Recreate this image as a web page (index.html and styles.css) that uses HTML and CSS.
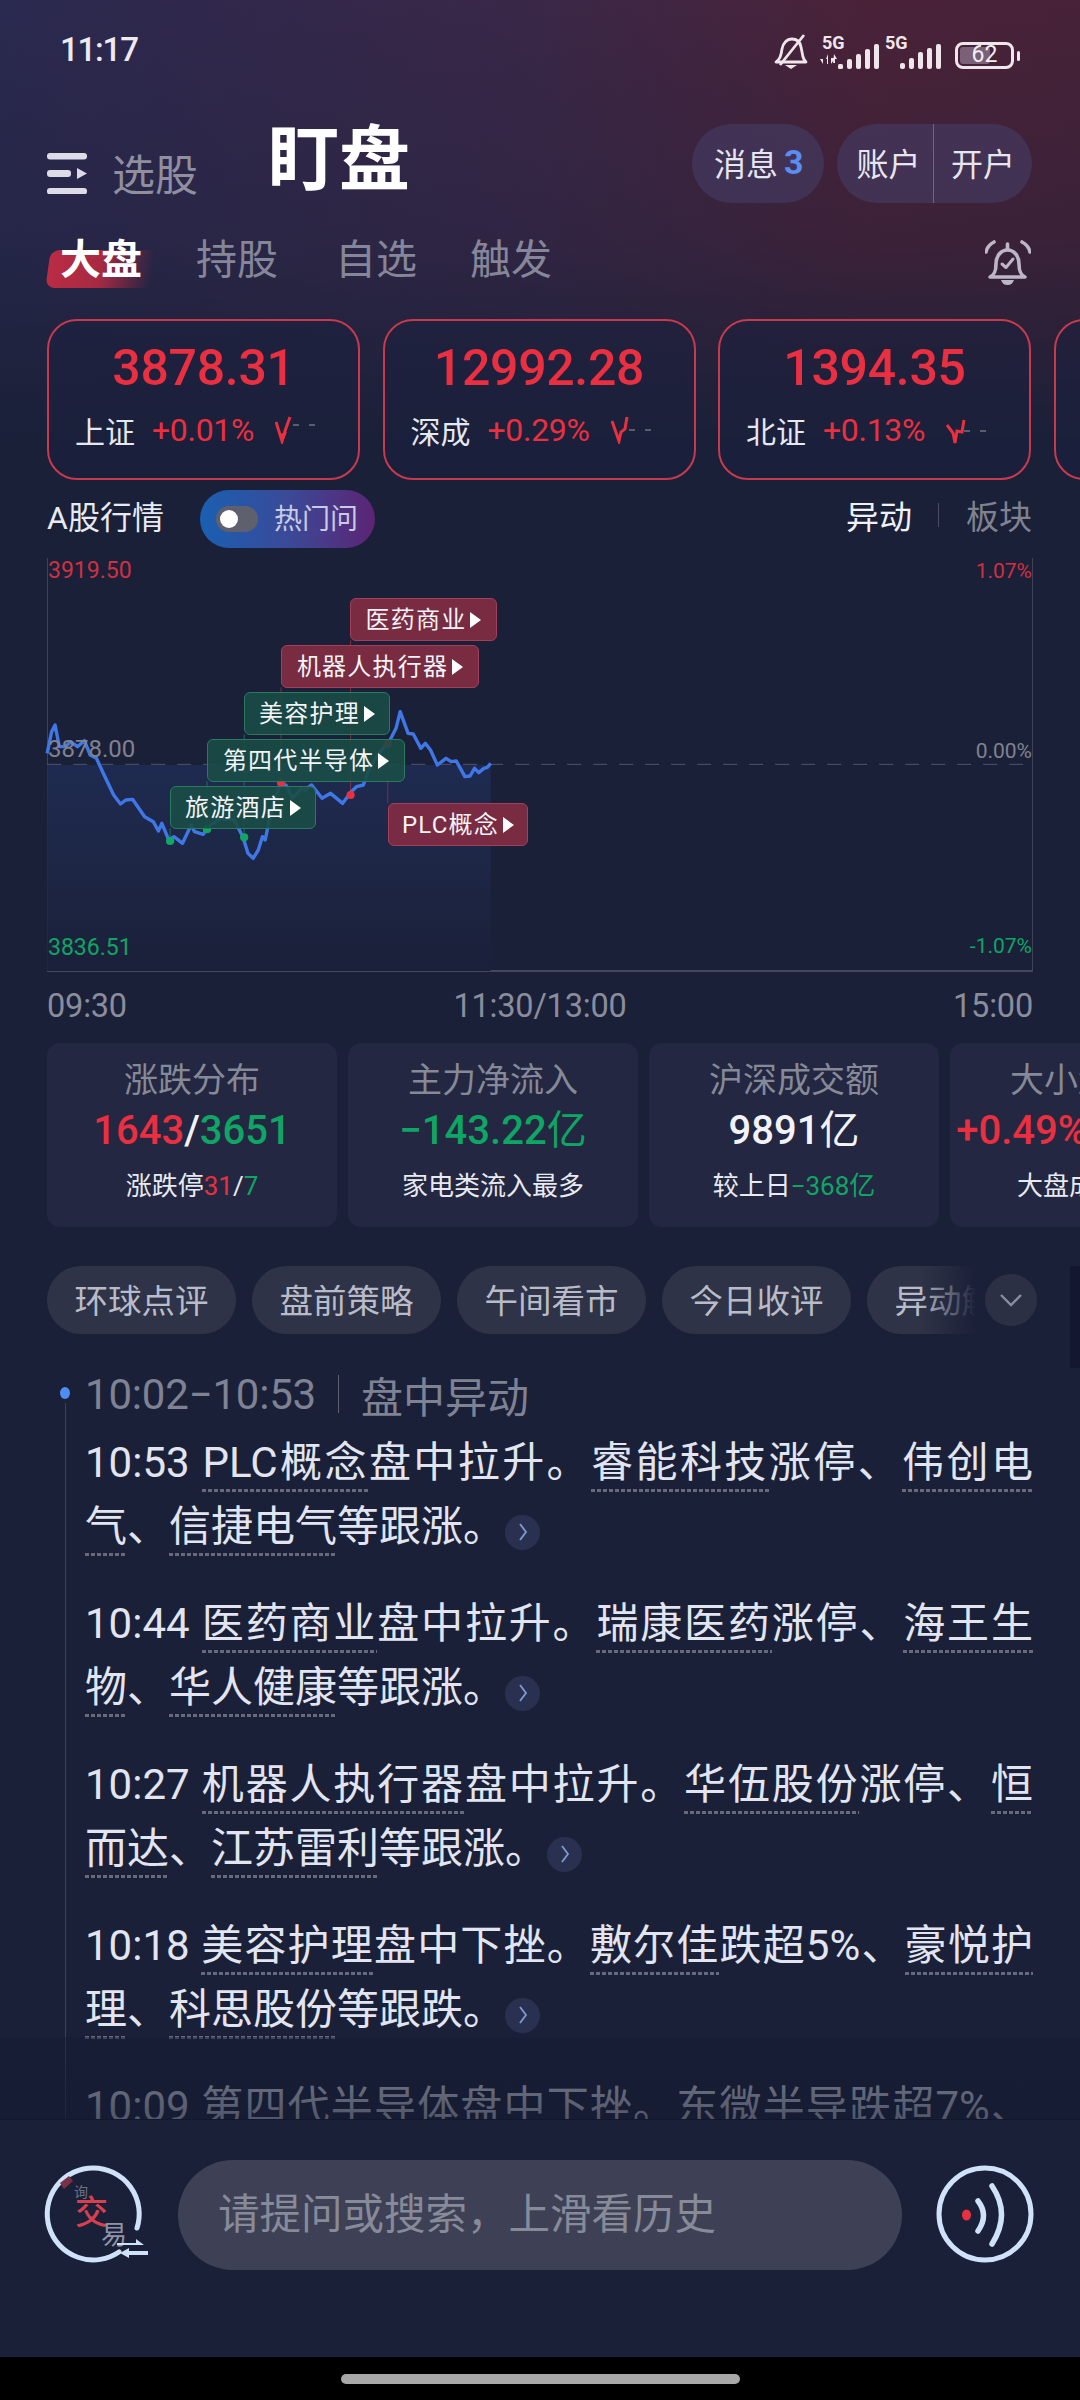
FILE: index.html
```html
<!DOCTYPE html>
<html lang="zh-CN">
<head>
<meta charset="utf-8">
<title>盯盘</title>
<link rel="stylesheet" href="styles.css">
</head>
<body>
<div class="page">
  <div class="status">
    <span class="time">11:17</span>
    <div class="status-icons">
      <svg class="ic-mute" viewBox="0 0 36 36"><path d="M3 29c4-3 5-6 6-13 1-6 5-10 10-10s8 3 9 8l2 10c.6 2 2 4 3 5H3z" fill="none" stroke="#efe6ec" stroke-width="2.8" stroke-linejoin="round"/><path d="M7 32 31 2" stroke="#efe6ec" stroke-width="2.8"/><path d="M12 32h12l-6 4z" fill="#efe6ec"/></svg>
      <div class="net">
        <span class="net-label">5G</span>
        <svg class="net-arrows" viewBox="0 0 18 10"><path d="M3 0v5H0l3 5zM8 0l-2 5h1v5h1zM11 10V4h4zM14 0l3 5h-2v4h-2z" fill="#efe6ec"/></svg>
      </div>
      <svg class="bars" viewBox="0 0 41 26"><g fill="#efe6ec"><rect x="0" y="21" width="5" height="5" rx="1.500"/><rect x="9" y="16" width="5" height="10" rx="2"/><rect x="18" y="11" width="5" height="15" rx="2"/><rect x="27" y="6" width="5" height="20" rx="2"/><rect x="36" y="1" width="5" height="25" rx="2"/></g></svg>
      <div class="net net-b">
        <span class="net-label">5G</span>
      </div>
      <svg class="bars" viewBox="0 0 41 26"><g fill="#efe6ec"><rect x="0" y="20" width="5" height="6" rx="2"/><rect x="9" y="15" width="5" height="11" rx="2"/><rect x="18" y="9" width="5" height="17" rx="2"/><rect x="27" y="5" width="5" height="21" rx="2"/><rect x="36" y="1" width="5" height="25" rx="2"/></g></svg>
      <div class="battery"><span class="battery-fill"></span><span class="battery-num">62</span></div>
      <span class="battery-tip"></span>
    </div>
  </div>

  <div class="header">
    <svg class="ic-menu" viewBox="0 0 40 41"><g fill="#dcdce6"><rect x="0" y="0" width="40" height="6.500" rx="3"/><rect x="0" y="17" width="24" height="7" rx="3"/><path d="M30 15l10 5.500-10 5.500z"/><rect x="0" y="35" width="40" height="6.500" rx="3"/></g></svg>
    <span class="head-sub">选股</span>
    <span class="head-main">盯盘</span>
    <div class="head-actions">
      <div class="pill pill-msg">消息<b class="msg-num">3</b></div>
      <div class="pill pill-split"><span class="split-a">账户</span><span class="split-b">开户</span></div>
    </div>
  </div>

  <div class="tabs">
    <span class="tab tab-on">大盘</span>
    <span class="tab tab-2">持股</span>
    <span class="tab tab-3">自选</span>
    <span class="tab tab-4">触发</span>
    <svg class="ic-alarm" viewBox="0 0 46 46"><g fill="none" stroke="#bdb6c6" stroke-width="3.600" stroke-linecap="round" stroke-linejoin="round"><path d="M5 37c4-2 6-5 6-13 0-8 5-14 11.500-14S34 16 34 24c0 8 2 11 6 13z"/><path d="M22.500 4v5"/><path d="M17 24l4 3.500 7-8.500" stroke-width="3"/><path d="M1 12c1-4 4-8 8-10"/><path d="M45 12c-1-4-4-8-8-10"/></g><path d="M16 40h13c-1 3-3 5-6.500 5S17 43 16 40z" fill="#bdb6c6"/></svg>
  </div>

  <div class="indices">
    <div class="index-card">
      <div class="index-value">3878.31</div>
      <div class="index-row"><span class="index-name">上证</span><span class="index-pct">+0.01%</span>
        <svg class="spark" viewBox="0 0 44 28"><path d="M18 9h26" stroke="#6f7282" stroke-width="1.600" stroke-dasharray="6 10"/><path d="M1 6l6 19 3-10 5-14" fill="none" stroke="#e8303f" stroke-width="3"/><path d="M5 18l3 8 4-10z" fill="#e8303f"/></svg>
      </div>
    </div>
    <div class="index-card">
      <div class="index-value">12992.28</div>
      <div class="index-row"><span class="index-name">深成</span><span class="index-pct">+0.29%</span>
        <svg class="spark" viewBox="0 0 44 28"><path d="M18 14h26" stroke="#6f7282" stroke-width="1.600" stroke-dasharray="6 10"/><path d="M1 5l7 20 2-9 4-3 2-12" fill="none" stroke="#e8303f" stroke-width="3"/></svg>
      </div>
    </div>
    <div class="index-card">
      <div class="index-value">1394.35</div>
      <div class="index-row"><span class="index-name">北证</span><span class="index-pct">+0.13%</span>
        <svg class="spark" viewBox="0 0 44 28"><path d="M18 15h26" stroke="#6f7282" stroke-width="1.600" stroke-dasharray="6 10"/><path d="M1 9l6 8 2 10 2-12 5 1 2-12" fill="none" stroke="#e8303f" stroke-width="3"/></svg>
      </div>
    </div>
    <div class="index-card"></div>
  </div>

  <div class="quote-head">
    <span class="quote-title">A股行情</span>
    <div class="hot-toggle"><span class="switch"><span class="knob"></span></span><span class="hot-text">热门问</span></div>
    <div class="quote-tabs"><span class="qt-on">异动</span><span class="qt-sep"></span><span class="qt-off">板块</span></div>
  </div>

  <div class="chart">
    <svg class="chart-svg" viewBox="0 0 1568 1350" preserveAspectRatio="none">
      <defs><linearGradient id="area" x1="0" y1="0" x2="0" y2="1"><stop offset="0" stop-color="#1e2a50"/><stop offset=".5" stop-color="#1d2645"/><stop offset="1" stop-color="#1b2039"/></linearGradient></defs>
      <rect x="137" y="645" width="1288" height="618" fill="url(#area)"/>
      <path class="dash" d="M137 643H3000"/>
      <path class="stem-r" d="M816 412V700M1018 271V735M1126 575V760"/>
      <path class="stem-g" d="M601 694V838M494 835V873M709 553V860"/>
      <polyline class="price" points="137,610 150,545 160,525 172,590 190,590 205,575 225,590 245,572 262,615 280,625 300,670 330,735 350,762 365,750 385,748 420,800 445,815 460,843 470,820 490,870 505,860 530,880 555,825 565,845 590,853 605,830 640,805 680,810 705,860 720,910 735,925 750,900 762,860 770,870 790,770 815,700 830,705 850,745 875,715 885,720 905,705 935,745 960,730 995,760 1020,725 1035,710 1055,705 1075,650 1100,610 1130,575 1150,535 1162,485 1185,550 1200,552 1222,595 1235,580 1250,600 1270,645 1295,625 1310,635 1325,633 1350,680 1365,678 1378,655 1390,668 1405,655 1415,652 1425,640"/>
      <g fill="#e8303f"><circle cx="816" cy="698" r="12"/><circle cx="1018" cy="735" r="12"/><circle cx="1126" cy="582" r="12"/></g>
      <g fill="#12a765"><circle cx="494" cy="873" r="12"/><circle cx="601" cy="838" r="12"/><circle cx="709" cy="862" r="12"/></g>
    </svg>
    <span class="y-label y-top red-dim">3919.50</span>
    <span class="y-label y-mid grey">3878.00</span>
    <span class="y-label y-low green">3836.51</span>
    <span class="yr-label yr-top red-dim">1.07%</span>
    <span class="yr-label yr-mid grey">0.00%</span>
    <span class="yr-label yr-low green">-1.07%</span>
    <div class="tag tag-r tag-yy">医药商业<i class="tri"></i></div>
    <div class="tag tag-r tag-jq">机器人执行器<i class="tri"></i></div>
    <div class="tag tag-g tag-mr">美容护理<i class="tri"></i></div>
    <div class="tag tag-g tag-bd">第四代半导体<i class="tri"></i></div>
    <div class="tag tag-g tag-ly">旅游酒店<i class="tri"></i></div>
    <div class="tag tag-r tag-plc">PLC概念<i class="tri"></i></div>
  </div>

  <div class="axis"><span>09:30</span><span>11:30/13:00</span><span>15:00</span></div>

  <div class="stats">
    <div class="stat">
      <div class="stat-title">涨跌分布</div>
      <div class="stat-value"><span class="red">1643</span><span class="white">/</span><span class="green">3651</span></div>
      <div class="stat-sub">涨跌停<span class="red">31</span>/<span class="green">7</span></div>
    </div>
    <div class="stat">
      <div class="stat-title">主力净流入</div>
      <div class="stat-value green">−143.22<span class="unit">亿</span></div>
      <div class="stat-sub">家电类流入最多</div>
    </div>
    <div class="stat">
      <div class="stat-title">沪深成交额</div>
      <div class="stat-value white">9891<span class="unit">亿</span></div>
      <div class="stat-sub">较上日<span class="green">−368亿</span></div>
    </div>
    <div class="stat">
      <div class="stat-title">大小盘风格</div>
      <div class="stat-value red">+0.49%/+0.49%</div>
      <div class="stat-sub">大盘成长占优</div>
    </div>
  </div>

  <div class="chips">
    <span class="chip">环球点评</span>
    <span class="chip">盘前策略</span>
    <span class="chip">午间看市</span>
    <span class="chip">今日收评</span>
    <span class="chip">异动解读</span>
    <span class="chip-fade"></span>
    <span class="chip-more"><svg viewBox="0 0 24 14"><path d="M2 2l10 10L22 2" fill="none" stroke="#8a8d9c" stroke-width="2.400"/></svg></span>
    <span class="edge-bar"></span>
  </div>

  <div class="feed">
    <div class="feed-head"><span class="feed-time">10:02−10:53</span><span class="feed-sep"></span><span class="feed-kind">盘中异动</span></div>
    <div class="para">
      <span class="ln">10:53 <u>PLC概念</u>盘中拉升。<u>睿能科技</u>涨停、<u>伟创电</u></span>
      <span class="ln-end"><u>气</u>、<u>信捷电气</u>等跟涨。<i class="more"><svg viewBox="0 0 12 24"><path d="M3 4l6 8-6 8" fill="none" stroke="#7f9ad6" stroke-width="1.800"/></svg></i></span>
    </div>
    <div class="para">
      <span class="ln">10:44 <u>医药商业</u>盘中拉升。<u>瑞康医药</u>涨停、<u>海王生</u></span>
      <span class="ln-end"><u>物</u>、<u>华人健康</u>等跟涨。<i class="more"><svg viewBox="0 0 12 24"><path d="M3 4l6 8-6 8" fill="none" stroke="#7f9ad6" stroke-width="1.800"/></svg></i></span>
    </div>
    <div class="para">
      <span class="ln">10:27 <u>机器人执行器</u>盘中拉升。<u>华伍股份</u>涨停、<u>恒</u></span>
      <span class="ln-end"><u>而达</u>、<u>江苏雷利</u>等跟涨。<i class="more"><svg viewBox="0 0 12 24"><path d="M3 4l6 8-6 8" fill="none" stroke="#7f9ad6" stroke-width="1.800"/></svg></i></span>
    </div>
    <div class="para">
      <span class="ln">10:18 <u>美容护理</u>盘中下挫。<u>敷尔佳</u>跌超5%、<u>豪悦护</u></span>
      <span class="ln-end"><u>理</u>、<u>科思股份</u>等跟跌。<i class="more"><svg viewBox="0 0 12 24"><path d="M3 4l6 8-6 8" fill="none" stroke="#7f9ad6" stroke-width="1.800"/></svg></i></span>
    </div>
    <div class="para">
      <span class="ln">10:09 <u>第四代半导体</u>盘中下挫。<u>东微半导</u>跌超7%、</span>
    </div>
    <span class="feed-fade"></span>
  </div>

  <div class="dock">
    <svg class="dock-ic" viewBox="0 0 96 96">
      <path d="M91 62A46 46 0 1 0 73 86" fill="none" stroke="#cfe2f8" stroke-width="5" stroke-linecap="round"/>
      <path d="M14 17l9-7 4 5-9 8z" fill="#7a3148"/>
      <text class="ic-xun" x="28" y="31">询</text>
      <text class="ic-jiao" x="29" y="58">交</text>
      <text class="ic-yi" x="55" y="78">易</text>
      <path d="M71 77h19v-4l8 6H71zM74 87l9-5v3h19v4H83v3z" fill="#cfe2f8"/>
    </svg>
    <div class="search">请提问或搜索，上滑看历史</div>
    <svg class="dock-ic" viewBox="0 0 96 96">
      <circle cx="48" cy="48" r="46" fill="none" stroke="#cfe2f8" stroke-width="5"/>
      <ellipse cx="29.500" cy="49" rx="4.500" ry="5.500" fill="#e8303f"/>
      <path d="M41 35Q52 49 41 65M55 20Q74 48 55 78" fill="none" stroke="#cfe2f8" stroke-width="5.500" stroke-linecap="round"/>
    </svg>
  </div>

  <div class="navbar"><span class="handle"></span></div>
</div>
</body>
</html>
```
FILE: styles.css
```css
* { box-sizing: border-box; }
html, body { margin: 0; padding: 0; background: #1a2038; }
body { font-family: Roboto, "Noto Sans CJK SC", sans-serif; color: #fff; }
i { font-style: normal; }

.page {
  position: relative;
  width: 1080px;
  height: 2400px;
  overflow: hidden;
  display: flex;
  flex-direction: column;
  background-color: #1a2038;
  background-image:
    linear-gradient(to bottom, rgba(26,32,56,0) 0, rgba(26,32,56,.3) 240px, #1a2038 440px),
    linear-gradient(to right, #2a294f 0, #3a2747 50%, #4a2238 80%, #472238 100%);
  background-size: 100% 440px;
  background-repeat: no-repeat;
}

.red { color: #ea2f40; }
.red-dim { color: #cf3042; }
.green { color: #0fa565; }
.grey { color: #80838f; }
.white { color: #f2f3f8; }

/* status bar */
.status { height: 124px; display: flex; justify-content: space-between; padding: 33px 60px 0 60px; flex: none; }
.time { font-size: 33px; font-weight: 500; line-height: 34px; letter-spacing: -1.2px; color: #efe9f0; }
.status-icons { display: flex; align-items: flex-start; }
.ic-mute { width: 36px; height: 36px; margin-right: 13px; }
.net { position: relative; width: 16px; height: 30px; margin-top: 2px; }
.net-b { margin-left: 6px; width: 15px; }
.net-label { position: absolute; left: 0; top: 0; font-size: 18px; line-height: 16px; font-weight: 700; color: #efe6ec; }
.net-arrows { position: absolute; left: -2px; top: 19px; width: 18px; height: 10px; }
.bars { width: 41px; height: 26px; margin-top: 10px; }
.battery { position: relative; width: 59px; height: 27px; margin: 9px 0 0 14px; border: 3px solid #efe6ec; border-radius: 8px; }
.battery-fill { position: absolute; left: 2px; top: 2px; bottom: 2px; width: 30px; border-radius: 3px; background: #7a6178; }
.battery-num { position: absolute; left: 0; right: 0; top: -3px; text-align: center; font-size: 23px; line-height: 26px; color: #f3eef2; }
.battery-tip { width: 3px; height: 10px; margin: 18px 0 0 3px; border-radius: 2px; background: #efe6ec; }

/* header */
.header { height: 79px; flex: none; display: flex; align-items: flex-start; padding-left: 47px; }
.ic-menu { width: 40px; height: 41px; margin-top: 29px; }
.head-sub { margin: 24px 0 0 25px; font-size: 43px; line-height: 56px; color: #8f8f9f; width: 156px; }
.head-main { font-size: 71px; line-height: 72px; font-weight: 700; color: #fff; margin-top: 0; }
.head-actions { margin-left: auto; margin-right: 48px; display: flex; gap: 13px; }
.pill { height: 79px; border-radius: 40px; background: rgba(70,66,110,.5); display: flex; align-items: center; font-size: 32px; color: #e6e6f0; padding-bottom: 4px; }
.pill-msg { padding: 0 19px 4px 22px; width: 132px; }
.msg-num { margin-left: 6px; color: #5b8df0; font-weight: 700; font-size: 34px; }
.pill-split { width: 195px; }
.split-a, .split-b { flex: 1; height: 100%; display: flex; align-items: center; justify-content: center; }
.split-a { flex: 0 0 97px; position: relative; padding-left: 6px; }
.split-a::after { content: ""; position: absolute; right: 0; top: 0; height: 79px; width: 1px; background: #6c6880; }

/* tabs */
.tabs { height: 116px; flex: none; position: relative; padding-left: 60px; }
.tab { position: absolute; top: 32px; font-size: 41px; line-height: 50px; color: #85869a; }
.tab-on { left: 60px; font-weight: 700; color: #fff; z-index: 1; }
.tab-on::before { content: ""; position: absolute; z-index: -1; left: -12px; top: 15px; width: 104px; height: 38px; border-radius: 9px 0 0 9px; background: linear-gradient(to right, #b92c44 0, #a72a42 50%, rgba(167,42,66,0) 100%); transform: skewX(-8deg); }
.tab-2 { left: 196px; }
.tab-3 { left: 335px; }
.tab-4 { left: 470px; }
.ic-alarm { position: absolute; right: 49px; top: 37px; width: 46px; height: 46px; }

/* index cards */
.indices { height: 161px; flex: none; display: flex; gap: 22.500px; padding-left: 47px; }
.index-card { flex: 0 0 313px; height: 161px; border: 2px solid #c73a4e; border-radius: 30px; padding-top: 17px; background: rgba(28,32,62,.55); }
.index-value { text-align: center; font-size: 50px; line-height: 60px; font-weight: 500; color: #ea2f40; letter-spacing: -.3px; }
.index-row { display: flex; align-items: center; margin-top: 12px; padding-left: 26px; height: 40px; }
.index-name { font-size: 30px; color: #e6e8f0; width: 77px; }
.index-pct { font-size: 32px; color: #ea2f40; width: 123px; letter-spacing: -.3px; }
.spark { width: 44px; height: 28px; flex: none; }

/* quote head */
.quote-head { height: 58px; flex: none; margin: 10px 48px 0 47px; display: flex; align-items: center; }
.quote-title { font-size: 32px; color: #e8eaf2; width: 153px; margin-top: -8px; white-space: nowrap; }
.hot-toggle { width: 175px; height: 58px; border-radius: 29px; background: linear-gradient(to right, #1a5fb2 0, #3a4a98 50%, #5c2474 100%); display: flex; align-items: center; padding-left: 16px; }
.switch { width: 42px; height: 26px; border-radius: 13px; background: #5e616d; display: flex; align-items: center; padding-left: 4px; }
.knob { width: 18px; height: 18px; border-radius: 50%; background: #fff; }
.hot-text { margin-left: 16px; font-size: 28px; color: #c7cbe4; padding-bottom: 4px; }
.quote-tabs { margin-left: auto; display: flex; align-items: center; font-size: 33px; margin-top: -8px; }
.qt-on { color: #f0f1f6; }
.qt-sep { width: 1px; height: 24px; background: #4b4e60; margin: 0 27px 0 26px; }
.qt-off { color: #80838f; }

/* chart */
.chart { position: relative; height: 414px; flex: none; margin: 10px 47px 0 47px; border-left: 1px solid #3f4358; border-right: 1px solid #3f4358; border-bottom: 2px solid #44485e; }
.chart-svg { position: absolute; left: -48px; top: -8px; width: 540px; height: 450px; overflow: visible; }
.price { fill: none; stroke: #3f78e6; stroke-width: 3.4px; vector-effect: non-scaling-stroke; stroke-linejoin: round; }
.dash { stroke: #51556a; stroke-width: 1px; stroke-dasharray: 14 12; vector-effect: non-scaling-stroke; }
.stem-r { stroke: #7a3045; stroke-width: 1px; vector-effect: non-scaling-stroke; fill: none; }
.stem-g { stroke: #2a6a5c; stroke-width: 1px; vector-effect: non-scaling-stroke; fill: none; }
.y-label, .yr-label { position: absolute; font-size: 23px; line-height: 26px; }
.y-label { left: 0; }
.yr-label { right: 0; font-size: 21px; }
.y-top { top: 0; }
.y-mid { top: 178px; font-size: 24px; }
.y-low { top: 377px; }
.yr-top { top: 0; }
.yr-mid { top: 180px; }
.yr-low { top: 375px; }
.tag { position: absolute; height: 43px; border-radius: 6px; font-size: 24px; letter-spacing: 1.2px; display: flex; align-items: center; justify-content: center; color: #f2f3f6; white-space: nowrap; padding-bottom: 5px; }
.tag-r { background: rgba(124,44,66,.96); border: 1px solid #a2405a; }
.tag-g { background: rgba(26,76,70,.9); border: 1px solid #2a7a62; }
.tri { width: 0; height: 0; margin: 5px 0 0 4px; border-left: 11px solid #fff; border-top: 8px solid transparent; border-bottom: 8px solid transparent; }
.tag-yy { left: 302px; top: 40px; width: 147px; }
.tag-jq { left: 233px; top: 87px; width: 198px; }
.tag-mr { left: 196px; top: 134px; width: 146px; }
.tag-bd { left: 159px; top: 181px; width: 198px; }
.tag-ly { left: 122px; top: 228px; width: 146px; }
.tag-plc { left: 340px; top: 245px; width: 140px; }

/* time axis */
.axis { flex: none; height: 34px; margin: 17px 47px 0 47px; display: flex; justify-content: space-between; font-size: 32.500px; line-height: 34px; color: #8a8d9c; letter-spacing: -.2px; }

/* stats */
.stats { flex: none; height: 184px; margin-top: 20px; padding-left: 47px; display: flex; gap: 11px; }
.stat { flex: 0 0 290px; height: 184px; border-radius: 13px; background: #232741; padding-top: 15px; text-align: center; white-space: nowrap; overflow: hidden; }
.stat-title { font-size: 34px; line-height: 44px; color: #868997; }
.stat-value { font-size: 40px; line-height: 58px; font-weight: 500; }
.unit { font-weight: 400; }
.stat-sub { margin-top: 4px; font-size: 26px; line-height: 44px; color: #e8eaf2; }

/* chips */
.chips { flex: none; height: 68px; margin-top: 39px; padding-left: 47px; display: flex; gap: 16px; position: relative; }
.chip { flex: 0 0 189px; height: 68px; border-radius: 34px; background: #2f3347; display: flex; align-items: center; justify-content: center; font-size: 33.500px; color: #b9bcc8; padding-bottom: 3px; }
.chip-fade { position: absolute; left: 920px; top: 0; width: 160px; height: 68px; background: linear-gradient(to right, rgba(26,32,56,0) 0, #1a2038 35%); }
.chip-more { position: absolute; left: 985px; top: 8px; width: 52px; height: 52px; border-radius: 50%; background: #2c3045; display: flex; align-items: center; justify-content: center; }
.chip-more svg { width: 24px; height: 14px; }
.edge-bar { position: absolute; right: 0; top: 0; width: 10px; height: 102px; background: #131830; }

/* feed */
.feed { flex: 1; min-height: 0; position: relative; overflow: hidden; padding: 35px 47px 0 85px; }
.feed::before { content: ""; position: absolute; left: 65px; top: 69px; bottom: 0; width: 1px; background: #3d4156; }
.feed::after { content: ""; position: absolute; left: 60px; top: 53px; width: 10px; height: 12px; border-radius: 50%; background: #4f8df2; }
.feed-head { display: flex; align-items: center; height: 50px; color: #7f8292; font-size: 42px; }
.feed-time { font-size: 42px; letter-spacing: -.2px; }
.feed-sep { width: 1px; height: 38px; background: #5c5f70; margin: 0 22px; }
.para { margin-top: 12px; margin-bottom: 33px; font-size: 42px; line-height: 64px; color: #e2e5f0; }
.para + .para { margin-top: 0; }
.ln { display: block; text-align: justify; text-align-last: justify; white-space: nowrap; }
.ln-end { display: block; white-space: nowrap; }
u { text-decoration: none; padding-bottom: 5px; background-image: repeating-linear-gradient(to right, #666a7a 0, #666a7a 4px, transparent 4px, transparent 6px); background-size: 100% 3px; background-repeat: no-repeat; background-position: left bottom; }
.more { display: inline-flex; align-items: center; justify-content: center; width: 35px; height: 35px; border-radius: 50%; background: #2a3150; margin-left: 0; vertical-align: -3px; }
.more svg { width: 12px; height: 24px; }
.feed-fade { position: absolute; left: 0; right: 0; bottom: 0; height: 82px; background: linear-gradient(to bottom, rgba(20,26,48,.45), rgba(20,26,48,.7)); }

/* dock */
.dock { flex: none; height: 238px; padding: 40px 0 0 46px; display: flex; align-items: flex-start; background: #1a2038; border-top: 1px solid #12172c; }
.dock-ic { width: 96px; height: 96px; flex: none; margin-top: 6px; overflow: visible; }
.ic-xun { font-size: 14px; fill: #6d7184; }
.ic-jiao { font-size: 33px; font-weight: 500; fill: #d8404f; }
.ic-yi { font-size: 26px; fill: #8f93a6; }
.search { width: 724px; height: 110px; margin: 0 35px 0 36px; border-radius: 55px; background: #3e4156; display: flex; align-items: center; padding: 0 0 8px 40px; font-size: 41.500px; color: #878a98; white-space: nowrap; }

/* nav */
.navbar { flex: none; height: 43px; background: #000; display: flex; justify-content: center; padding-top: 17px; }
.handle { width: 399px; height: 10px; border-radius: 5px; background: #a8a8a8; }
```
